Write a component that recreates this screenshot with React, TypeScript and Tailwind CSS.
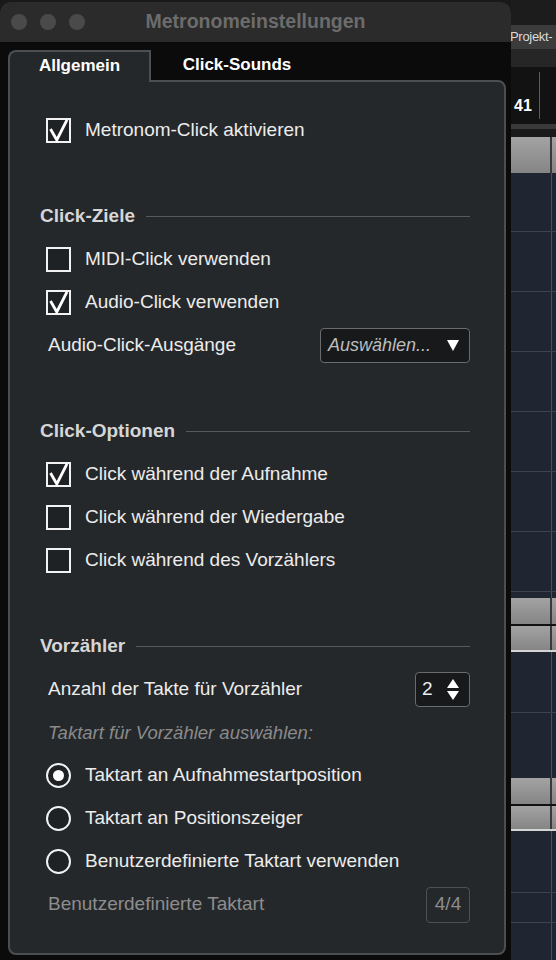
import React from 'react'

function Check({ checked }: { checked?: boolean }) {
  return (
    <span className="relative flex h-[25px] w-[25px] shrink-0 border-2 border-[#f2f2f2] bg-[#1f2225]">
      {checked && (
        <svg className="absolute -left-[2px] -top-[2px] h-[25px] w-[25px] overflow-visible" viewBox="0 0 25 25">
          <path d="M4.5 11 L10.8 22 L21 1.8" fill="none" stroke="#ffffff" strokeWidth="2.8" strokeLinejoin="miter" />
        </svg>
      )}
    </span>
  )
}

function Radio({ on }: { on?: boolean }) {
  return (
    <span className="flex h-[25px] w-[25px] shrink-0 items-center justify-center rounded-full border-[2.5px] border-[#f2f2f2] bg-[#1f2225]">
      {on && <span className="h-[11px] w-[11px] rounded-full bg-white" />}
    </span>
  )
}

function CheckRow({ label, checked }: { label: string; checked?: boolean }) {
  return (
    <div className="flex h-[43px] items-center gap-[14px] pl-[6px]">
      <Check checked={checked} />
      <span>{label}</span>
    </div>
  )
}

function RadioRow({ label, on }: { label: string; on?: boolean }) {
  return (
    <div className="flex h-[43px] items-center gap-[14px] pl-[6px]">
      <Radio on={on} />
      <span>{label}</span>
    </div>
  )
}

function Heading({ title }: { title: string }) {
  return (
    <div className="mt-[43px] flex h-[43px] items-center gap-[11px]">
      <span className="text-[19px] font-bold text-[#d6d6d6]">{title}</span>
      <div className="h-px flex-1 bg-[#58595c]" />
    </div>
  )
}

function GridRow({ className }: { className: string }) {
  return (
    <div className={`flex shrink-0 ${className}`}>
      <div className="w-[41px] border-r border-[#465061]" />
    </div>
  )
}

function GreyBlock({ className }: { className: string }) {
  return (
    <div className={`flex shrink-0 bg-gradient-to-b from-[#a3a3a3] to-[#858585] ${className}`}>
      <div className="w-[41px] border-r-2 border-[#3a3a3a]" />
    </div>
  )
}

export default function App() {
  return (
    <div className="flex h-[960px] w-[556px] overflow-hidden bg-[#191919] font-['Liberation_Sans',Arial,sans-serif] text-[19px] text-[#ececec]">
      {/* dialog window */}
      <div className="mt-[2px] flex h-[958px] w-[511px] shrink-0 flex-col rounded-t-[10px] bg-[#0b0b0b]">
        <div className="grid h-[40px] grid-cols-[1fr_auto_1fr] items-center rounded-t-[10px] bg-[#2b2b2b]">
          <div className="flex gap-[13px] pl-[11px]">
            <span className="h-[16px] w-[16px] rounded-full bg-[#4a4a4a]" />
            <span className="h-[16px] w-[16px] rounded-full bg-[#4a4a4a]" />
            <span className="h-[16px] w-[16px] rounded-full bg-[#4a4a4a]" />
          </div>
          <span className="text-[19.5px] font-bold text-[#6c6c6c]">Metronomeinstellungen</span>
          <div />
        </div>

        {/* tabs */}
        <div className="flex h-[38px] items-end pl-[8px] text-[17px] font-bold">
          <div className="relative z-10 -mb-[2px] flex h-[32px] w-[143px] items-center justify-center rounded-tl-[8px] border-2 border-b-0 border-[#4c4f52] bg-[#25282b] pb-[2px] text-white">
            Allgemein
          </div>
          <div className="flex h-[30px] w-[172px] items-center justify-center text-white">Click-Sounds</div>
        </div>

        <div className="ml-[8px] mr-[5px] rounded-tr-[8px] rounded-b-[8px] border-2 border-[#4c4f52] bg-[#25282b] pl-[30px] pr-[34px] pt-[27px] pb-[27px]">
          <CheckRow label="Metronom-Click aktivieren" checked />

          <Heading title="Click-Ziele" />
          <CheckRow label="MIDI-Click verwenden" />
          <CheckRow label="Audio-Click verwenden" checked />
          <div className="flex h-[43px] items-center justify-between pl-[8px]">
            <span>Audio-Click-Ausgänge</span>
            <div className="flex h-[35px] w-[150px] items-center justify-between rounded-[4px] border border-[#6a6b6d] bg-[#17191b] pl-[7px] pr-[10px]">
              <span className="text-[18px] italic text-[#bdbdbd]">Auswählen...</span>
              <svg width="12" height="11" viewBox="0 0 12 11">
                <polygon points="0,0 12,0 6,11" fill="#ffffff" />
              </svg>
            </div>
          </div>

          <Heading title="Click-Optionen" />
          <CheckRow label="Click während der Aufnahme" checked />
          <CheckRow label="Click während der Wiedergabe" />
          <CheckRow label="Click während des Vorzählers" />

          <Heading title="Vorzähler" />
          <div className="flex h-[43px] items-center justify-between pl-[8px]">
            <span>Anzahl der Takte für Vorzähler</span>
            <div className="flex h-[35px] w-[55px] items-center justify-between rounded-[4px] border border-[#6a6b6d] bg-[#17191b] pl-[6px] pr-[10px]">
              <span>2</span>
              <svg width="12" height="22" viewBox="0 0 12 22">
                <polygon points="6,0 12,9 0,9" fill="#ffffff" />
                <polygon points="0,12 12,12 6,21" fill="#ffffff" />
              </svg>
            </div>
          </div>
          <div className="flex h-[43px] items-center pl-[8px]">
            <span className="text-[18.5px] italic text-[#8a8a8a]">Taktart für Vorzähler auswählen:</span>
          </div>
          <RadioRow label="Taktart an Aufnahmestartposition" on />
          <RadioRow label="Taktart an Positionszeiger" />
          <RadioRow label="Benutzerdefinierte Taktart verwenden" />
          <div className="flex h-[43px] items-center justify-between pl-[8px] text-[#8d8d8d]">
            <span>Benutzerdefinierte Taktart</span>
            <div className="flex h-[36px] w-[44px] items-center justify-center rounded-[4px] border border-[#4e5053]">4/4</div>
          </div>
        </div>
      </div>

      {/* project window behind */}
      <div className="flex flex-1 flex-col overflow-hidden bg-[#1f2632]">
        <div className="h-[25px] shrink-0 bg-[#1c1c1c]" />
        <div className="-ml-[1px] flex h-[24px] shrink-0 items-center whitespace-nowrap bg-[#3b3b3b] text-[13px] tracking-[-0.3px] text-[#dadada]">
          Projekt-
        </div>
        <div className="h-[18px] shrink-0 bg-[#262626]" />
        <div className="flex h-[57px] shrink-0 bg-[#121212]">
          <div className="flex w-[28px] items-end pb-[6px] pl-[3px] text-[16px] font-bold text-white">41</div>
          <div className="my-[5px] w-px bg-[#5a5a5a]" />
        </div>
        <div className="h-[5px] shrink-0 bg-[#3a3a3a]" />
        <div className="h-[8px] shrink-0 bg-[#1a1a1a]" />
        <GreyBlock className="h-[36px]" />
        <GridRow className="h-[59px] border-b border-[#3a4352]" />
        <GridRow className="h-[60px] border-b border-[#3a4352]" />
        <GridRow className="h-[60px] border-b border-[#3a4352]" />
        <GridRow className="h-[60px] border-b border-[#3a4352]" />
        <GridRow className="h-[60px] border-b border-[#3a4352]" />
        <GridRow className="h-[60px] border-b border-[#3a4352]" />
        <GridRow className="h-[60px] border-b border-[#3a4352]" />
        <GridRow className="h-[6px]" />
        <GreyBlock className="h-[26px]" />
        <div className="h-[2px] shrink-0 bg-[#111]" />
        <GreyBlock className="h-[24px]" />
        <div className="h-[2px] shrink-0 bg-[#d4d4d4]" />
        <GridRow className="h-[61px] border-b border-[#3a4352]" />
        <GridRow className="h-[60px]" />
        <GridRow className="h-[5px]" />
        <GreyBlock className="h-[26px]" />
        <div className="h-[2px] shrink-0 bg-[#111]" />
        <GreyBlock className="h-[23px]" />
        <div className="h-[2px] shrink-0 bg-[#d4d4d4]" />
        <GridRow className="h-[62px] border-b border-[#3a4352]" />
        <GridRow className="h-[30px] border-b border-[#3a4352]" />
        <GridRow className="flex-1" />
      </div>
    </div>
  )
}
